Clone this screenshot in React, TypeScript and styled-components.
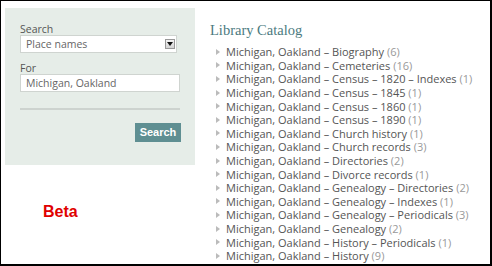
import React from 'react';
import styled, { createGlobalStyle } from 'styled-components';

const Global = createGlobalStyle`
  html, body { margin: 0; padding: 0; background: #fff; }
  * { box-sizing: border-box; }
`;

const entries: [string, number][] = [
  ['Biography', 6],
  ['Cemeteries', 16],
  ['Census \u2013 1820 \u2013 Indexes', 1],
  ['Census \u2013 1845', 1],
  ['Census \u2013 1860', 1],
  ['Census \u2013 1890', 1],
  ['Church history', 1],
  ['Church records', 3],
  ['Directories', 2],
  ['Divorce records', 1],
  ['Genealogy \u2013 Directories', 2],
  ['Genealogy \u2013 Indexes', 1],
  ['Genealogy \u2013 Periodicals', 3],
  ['Genealogy', 2],
  ['History \u2013 Periodicals', 1],
  ['History', 9]
];

const App = () => (
  <>
    <Global />
    <Frame>
      <Sidebar>
        <SearchPanel>
          <Label>Search</Label>
          <Select>
            <span>Place names</span>
            <DropButton>
              <svg width="6" height="4" viewBox="0 0 6 4"><path d="M0 0h6L3 4z" fill="#111" /></svg>
            </DropButton>
          </Select>
          <Label $top={10}>For</Label>
          <TextField>Michigan, Oakland</TextField>
          <Divider />
          <ButtonRow>
            <SearchButton>Search</SearchButton>
          </ButtonRow>
        </SearchPanel>
        <Beta>Beta</Beta>
      </Sidebar>
      <Catalog>
        <Title>Library Catalog</Title>
        <List>
          {entries.map(([topic, count]) => (
            <Item key={topic}>
              <Arrow />
              <span>Michigan, Oakland &ndash; {topic} <Count>({count})</Count></span>
            </Item>
          ))}
        </List>
      </Catalog>
    </Frame>
  </>
);

const Frame = styled.div`
  width: 492px;
  height: 266px;
  border: solid #000;
  border-width: 1px 2px 2px 1px;
  display: flex;
  overflow: hidden;
`;

const Sidebar = styled.div`
  width: 194px;
  padding-left: 4px;
  padding-top: 7px;
  flex-shrink: 0;
`;

const SearchPanel = styled.div`
  width: 190px;
  height: 157px;
  background: #e6ede8;
  padding: 16px 14px 0 15px;
  font-family: "Open Sans", "Liberation Sans", sans-serif;
`;

const Label = styled.div<{ $top?: number }>`
  font-size: 10.5px;
  line-height: 11px;
  color: #555;
  margin-top: ${p => p.$top ?? 0}px;
`;

const Select = styled.div`
  width: 157px;
  height: 18px;
  background: #fff;
  border: 1px solid #cfd4d0;
  display: flex;
  align-items: center;
  justify-content: space-between;
  padding: 0 1px 0 5px;
  font-size: 10.5px;
  color: #666;
`;

const DropButton = styled.div`
  width: 10px;
  height: 10px;
  border: 1px solid #999;
  background: linear-gradient(#f4f4f4, #d4d4d4);
  display: flex;
  align-items: center;
  justify-content: center;
`;

const TextField = styled.div`
  width: 160px;
  height: 18px;
  background: #fff;
  border: 1px solid #cfd4d0;
  padding-left: 5px;
  font-size: 10.5px;
  line-height: 16px;
  color: #666;
`;

const Divider = styled.div`
  width: 160px;
  height: 2px;
  margin-top: 16px;
  background: #cdd3cf;
`;

const ButtonRow = styled.div`
  display: flex;
  justify-content: flex-end;
  margin-top: 13px;
`;

const SearchButton = styled.div`
  width: 46px;
  height: 19px;
  background: #5f8f92;
  color: #fff;
  font-family: "Liberation Sans", Arial, sans-serif;
  font-weight: bold;
  font-size: 11px;
  line-height: 19px;
  text-align: center;
`;

const Beta = styled.div`
  margin-top: 38px;
  padding-left: 38px;
  font-family: "Liberation Sans", Arial, sans-serif;
  font-weight: bold;
  font-size: 16px;
  line-height: 18px;
  color: #e00000;
`;

const Catalog = styled.div`
  padding-left: 15px;
  padding-top: 21px;
  flex: 1;
`;

const Title = styled.div`
  font-family: "Liberation Serif", "Times New Roman", serif;
  font-size: 14.5px;
  line-height: 16px;
  color: #4b7a80;
`;

const List = styled.div`
  margin-top: 7px;
  padding-left: 6px;
  font-family: "Open Sans", "Liberation Sans", sans-serif;
  font-size: 11px;
  color: #555;
`;

const Item = styled.div`
  display: flex;
  align-items: center;
  height: 13.6px;
  white-space: nowrap;
`;

const Arrow = styled.span`
  width: 0;
  height: 0;
  border-left: 4px solid #bbb;
  border-top: 3px solid transparent;
  border-bottom: 3px solid transparent;
  margin-right: 6px;
  flex-shrink: 0;
`;

const Count = styled.span`
  color: #999;
`;

export default App;
